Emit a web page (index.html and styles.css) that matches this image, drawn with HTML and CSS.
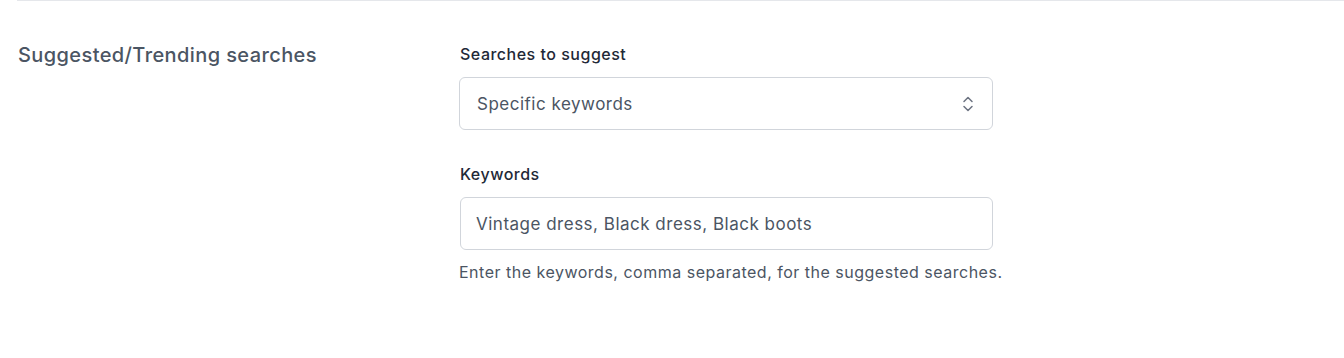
FILE: index.html
```html
<!DOCTYPE html>
<html lang="en">
  <head>
    <meta charset="UTF-8" />
    <title>Search settings</title>
    <link rel="stylesheet" href="styles.css">
  </head>
  <body>
    <div class="section">
      <h2 class="section-title">Suggested/Trending searches</h2>
      <div class="fields">
        <div class="field">
          <label class="label" for="suggest">Searches to suggest</label>
          <div class="select" id="suggest">
            <span class="select-value">Specific keywords</span>
            <svg class="chevron" width="14" height="20" viewBox="0 0 14 20" fill="none">
              <path d="M3 7.5 L7 3.5 L11 7.5" stroke="#6b7280" stroke-width="1.5" stroke-linecap="round" stroke-linejoin="round" />
              <path d="M3 12.5 L7 16.5 L11 12.5" stroke="#6b7280" stroke-width="1.5" stroke-linecap="round" stroke-linejoin="round" />
            </svg>
          </div>
        </div>
        <div class="field">
          <label class="label" for="keywords">Keywords</label>
          <input class="input" id="keywords" type="text" value="Vintage dress, Black dress, Black boots" />
          <p class="help">Enter the keywords, comma separated, for the suggested searches.</p>
        </div>
      </div>
    </div>
  </body>
</html>
```

FILE: styles.css
```css
body {
  margin: 0;
  font-family: Inter, "Noto Sans", sans-serif;
  background: #fff;
  color: #1f2937;
}

.section {
  margin-left: 17px;
  border-top: 1px solid #e5e7eb;
  padding-top: 42px;
  display: grid;
  grid-template-columns: 442px 534px;
}

.section-title {
  margin: 0;
  font-size: 20px;
  font-weight: 500;
  letter-spacing: 0.4px;
  color: #4b5563;
  line-height: 26px;
  padding-left: 1px;
  margin-top: -1px;
}

.fields {
  display: flex;
  flex-direction: column;
  gap: 33px;
}

.field {
  display: flex;
  flex-direction: column;
}

.label {
  font-size: 16px;
  font-weight: 500;
  letter-spacing: 0.5px;
  color: #1f2937;
  line-height: 22px;
  margin-bottom: 12px;
  padding-left: 1px;
}

.select {
  height: 53px;
  box-sizing: border-box;
  border: 1px solid #d1d5db;
  border-radius: 6px;
  display: flex;
  align-items: center;
  justify-content: space-between;
  padding: 0 17px;
}

.select-value {
  font-size: 17px;
  letter-spacing: 0.5px;
  color: #4b5563;
}

.input {
  height: 53px;
  box-sizing: border-box;
  border: 1px solid #d1d5db;
  border-radius: 6px;
  padding: 0 15px;
  font-family: inherit;
  font-size: 17px;
  letter-spacing: 0.5px;
  color: #4b5563;
  margin-left: 1px;
}

.help {
  margin: 11px 0 0;
  font-size: 16px;
  letter-spacing: 0.5px;
  color: #4b5563;
  line-height: 22px;
  white-space: nowrap;
}
```
